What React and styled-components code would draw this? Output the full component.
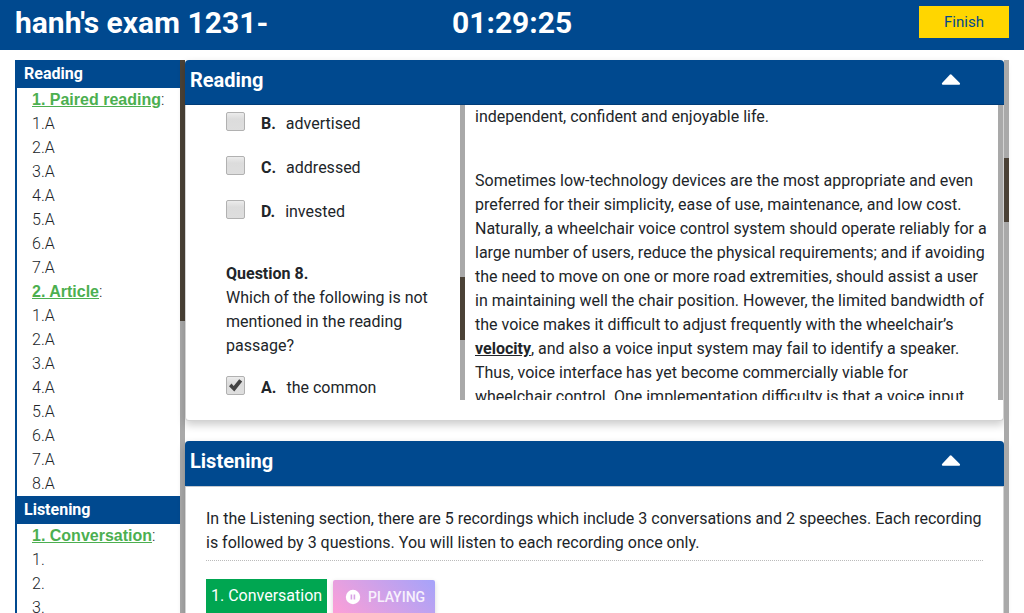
import React from "react";
import styled, { createGlobalStyle, css } from "styled-components";

const BLUE = "#00498f";

const GlobalStyle = createGlobalStyle`
  *, *::before, *::after { box-sizing: border-box; }
  html, body { margin: 0; height: 100%; overflow: hidden; }
  body {
    background: #fff;
    color: #212529;
    font-family: Roboto, "Liberation Sans", sans-serif;
    font-size: 16px;
    line-height: 24px;
  }
`;

const Page = styled.div`
  display: flex;
  flex-direction: column;
  height: 100vh;
  overflow: hidden;
`;

const TopBar = styled.header`
  display: grid;
  grid-template-columns: 437px 1fr auto;
  align-items: start;
  flex: none;
  height: 50px;
  padding: 0 15px;
  background: ${BLUE};
  color: #fff;
`;

const TopTitle = styled.h1`
  margin: 0;
  padding-top: 5px;
  font-size: 30px;
  font-weight: 700;
  line-height: 36px;
  white-space: nowrap;
`;

const FinishButton = styled.button`
  width: 90px;
  height: 32px;
  margin-top: 6px;
  padding: 0;
  border: 0;
  background: #ffd600;
  color: ${BLUE};
  font: 400 15px/32px Roboto, sans-serif;
`;

const Workspace = styled.div`
  display: flex;
  flex: 1;
  min-height: 0;
  padding: 10px 15px 0;
  overflow: hidden;
`;

const Sidebar = styled.nav`
  display: flex;
  flex: none;
  width: 170px;
  overflow: hidden;
`;

const SidebarList = styled.div`
  flex: 1;
  border-left: 2px solid ${BLUE};
`;

const SidebarHeading = styled.div`
  height: 28px;
  padding-left: 7px;
  background: ${BLUE};
  color: #fff;
  font-weight: 700;
  line-height: 27px;
`;

const SidebarRow = styled.div`
  height: 24px;
  padding-left: 15px;
  font-weight: 300;
  white-space: nowrap;
`;

const SectionLink = styled.a`
  color: #4caf50;
  font-family: "Liberation Sans", Arial, sans-serif;
  font-weight: 700;
  text-decoration: underline;
`;

const Track = styled.div`
  flex: none;
  width: 5px;
  padding-top: ${(p) => p.$offset || 0}px;
  background: #a9a9a9;
`;

const Thumb = styled.div`
  height: ${(p) => p.$size}px;
  background: #4b4237;
`;

const Main = styled.main`
  flex: 1;
  min-width: 0;
  display: flex;
  flex-direction: column;
  gap: 20px;
`;

const Card = styled.section`
  flex: none;
  display: flex;
  flex-direction: column;
  height: ${(p) => p.$height}px;
  border: 1px solid #d3d3d3;
  border-top: 0;
  border-radius: 4px;
  background: #fff;
  box-shadow: 0 4px 8px rgba(0, 0, 0, 0.2);
`;

const CardHeader = styled.div`
  display: flex;
  flex: none;
  justify-content: space-between;
  align-items: flex-start;
  height: ${(p) => (p.$ruled ? 46 : 45)}px;
  margin: 0 -1px;
  padding: 0 43px 0 5px;
  border-bottom: 1px solid ${(p) => (p.$ruled ? "#c5c9cf" : "#003c78")};
  border-radius: 4px 4px 0 0;
  background: ${BLUE};
  background-clip: padding-box;
  color: #fff;
`;

const CardTitle = styled.h2`
  margin: 0;
  padding-top: 8px;
  font-size: 20px;
  font-weight: 700;
  line-height: 24px;
`;

const CaretIcon = styled.svg`
  width: 20px;
  height: 12px;
  margin-top: 14px;
  fill: #fff;
`;

const SplitBody = styled.div`
  display: flex;
  height: 295px;
  overflow: hidden;
`;

const Questions = styled.div`
  flex: none;
  width: 274px;
  padding: 7px 0 0 40px;
  overflow: hidden;
`;

const Option = styled.label`
  display: flex;
  height: 24px;
  margin-bottom: 20px;
`;

const optionLast = css`
  margin-bottom: 0;
`;

const AnswerOption = styled(Option)`
  ${(p) => p.$last && optionLast}
`;

const Box = styled.span`
  display: flex;
  align-items: center;
  justify-content: center;
  flex: none;
  width: 19px;
  height: 19px;
  margin-right: 16px;
  border: 1px solid #b1b1b1;
  border-radius: 2px;
  background: linear-gradient(#ececec, #dcdcdc 35%, #dedede);
`;

const Letter = styled.b`
  margin-right: 10px;
`;

const QuestionText = styled.p`
  margin: 38px 0 18px;
  white-space: nowrap;
`;

const Passage = styled.article`
  flex: 1;
  min-width: 0;
  padding-left: 10px;
  overflow: hidden;
  white-space: nowrap;
`;

const Paragraph = styled.p`
  margin: 0 0 40px;
`;

const Line = styled.span`
  display: block;
`;

const Keyword = styled.b`
  text-decoration: underline;
`;

const ListeningBody = styled.div`
  padding: 20px 20px 0;
`;

const Intro = styled.p`
  margin: 0 0 18px;
  padding-bottom: 5px;
  border-bottom: 1px dotted #bbb;
  white-space: nowrap;
`;

const Controls = styled.div`
  display: flex;
  gap: 6px;
`;

const TrackLabel = styled.div`
  width: 121px;
  height: 36px;
  padding: 5px 0 0 5px;
  background: #00a651;
  color: #fff;
  white-space: nowrap;
`;

const PlayingButton = styled.div`
  display: flex;
  align-items: center;
  gap: 7px;
  width: 102px;
  height: 36px;
  margin-top: 1px;
  padding: 0 0 2px 12px;
  border-radius: 2px;
  background: linear-gradient(45deg, #ff9fd6, #a5a3fa);
  box-shadow: 0 2px 5px rgba(0, 0, 0, 0.16);
  color: #f7f1fc;
  font-size: 14px;
  font-weight: 500;
`;

function Caret() {
  return (
    <CaretIcon viewBox="0 0.4 20 12">
      <path d="M1.1 9.5 8.8 1.2Q9.7.3 10.6 1.2L18.8 9.5Q19.6 11.2 18 11.2H2Q.3 11.2 1.1 9.5Z" />
    </CaretIcon>
  );
}

function Tick() {
  return (
    <svg width="15" height="15" viewBox="0 0 15 15">
      <path d="M1 8.2 3.5 5.6 5.7 7.9 11.2 1.2 14.2 3.6 6.3 13.6Z" fill="#424242" />
    </svg>
  );
}

function PauseDisc() {
  return (
    <svg width="16" height="16" viewBox="0 0 16 16">
      <circle cx="8" cy="8" r="7.2" fill="#fff" />
      <path d="M5.6 5.4h1.6v5H5.6zM8.6 5.4h1.6v5H8.6z" fill="#d8a3e5" />
    </svg>
  );
}

function Choice({ letter, text, checked, last }) {
  return (
    <AnswerOption $last={last}>
      <Box>{checked && <Tick />}</Box>
      <Letter>{letter}.</Letter>
      <span>{text}</span>
    </AnswerOption>
  );
}

function SidebarSection({ title, answers }) {
  return (
    <>
      <SidebarRow>
        <SectionLink>{title}</SectionLink>:
      </SidebarRow>
      {answers.map((a, i) => (
        <SidebarRow key={i}>{`${i + 1}.${a}`}</SidebarRow>
      ))}
    </>
  );
}

const PASSAGE = [
  "Sometimes low-technology devices are the most appropriate and even",
  "preferred for their simplicity, ease of use, maintenance, and low cost.",
  "Naturally, a wheelchair voice control system should operate reliably for a",
  "large number of users, reduce the physical requirements; and if avoiding",
  "the need to move on one or more road extremities, should assist a user",
  "in maintaining well the chair position. However, the limited bandwidth of",
  "the voice makes it difficult to adjust frequently with the wheelchair’s",
];

export default function App() {
  return (
    <Page>
      <GlobalStyle />
      <TopBar>
        <TopTitle>hanh's exam 1231-</TopTitle>
        <TopTitle as="div">01:29:25</TopTitle>
        <FinishButton>Finish</FinishButton>
      </TopBar>
      <Workspace>
        <Sidebar>
          <SidebarList>
            <SidebarHeading>Reading</SidebarHeading>
            <SidebarSection title="1. Paired reading" answers={Array(7).fill("A")} />
            <SidebarSection title="2. Article" answers={Array(8).fill("A")} />
            <SidebarHeading>Listening</SidebarHeading>
            <SidebarSection title="1. Conversation" answers={["", "", ""]} />
          </SidebarList>
          <Track>
            <Thumb $size={261} />
          </Track>
        </Sidebar>
        <Main>
          <Card $height={361}>
            <CardHeader>
              <CardTitle>Reading</CardTitle>
              <Caret />
            </CardHeader>
            <SplitBody>
              <Questions>
                <Choice letter="B" text="advertised" />
                <Choice letter="C" text="addressed" />
                <Choice letter="D" text="invested" />
                <QuestionText>
                  <b>Question 8.</b>
                  <Line>Which of the following is not</Line>
                  <Line>mentioned in the reading</Line>
                  <Line>passage?</Line>
                </QuestionText>
                <Choice letter="A" text="the common" checked last />
              </Questions>
              <Track $offset={172}>
                <Thumb $size={63} />
              </Track>
              <Passage>
                <Paragraph>independent, confident and enjoyable life.</Paragraph>
                <Paragraph>
                  {PASSAGE.map((line) => (
                    <Line key={line}>{line}</Line>
                  ))}
                  <Line>
                    <Keyword>velocity</Keyword>, and also a voice input system may fail to identify a speaker.
                  </Line>
                  <Line>Thus, voice interface has yet become commercially viable for</Line>
                  <Line>wheelchair control. One implementation difficulty is that a voice input</Line>
                </Paragraph>
              </Passage>
              <Track />
            </SplitBody>
          </Card>
          <Card $height={400}>
            <CardHeader $ruled>
              <CardTitle>Listening</CardTitle>
              <Caret />
            </CardHeader>
            <ListeningBody>
              <Intro>
                <Line>In the Listening section, there are 5 recordings which include 3 conversations and 2 speeches. Each recording</Line>
                <Line>is followed by 3 questions. You will listen to each recording once only.</Line>
              </Intro>
              <Controls>
                <TrackLabel>1. Conversation</TrackLabel>
                <PlayingButton>
                  <PauseDisc />
                  PLAYING
                </PlayingButton>
              </Controls>
            </ListeningBody>
          </Card>
        </Main>
        <Track $offset={98}>
          <Thumb $size={64} />
        </Track>
      </Workspace>
    </Page>
  );
}
